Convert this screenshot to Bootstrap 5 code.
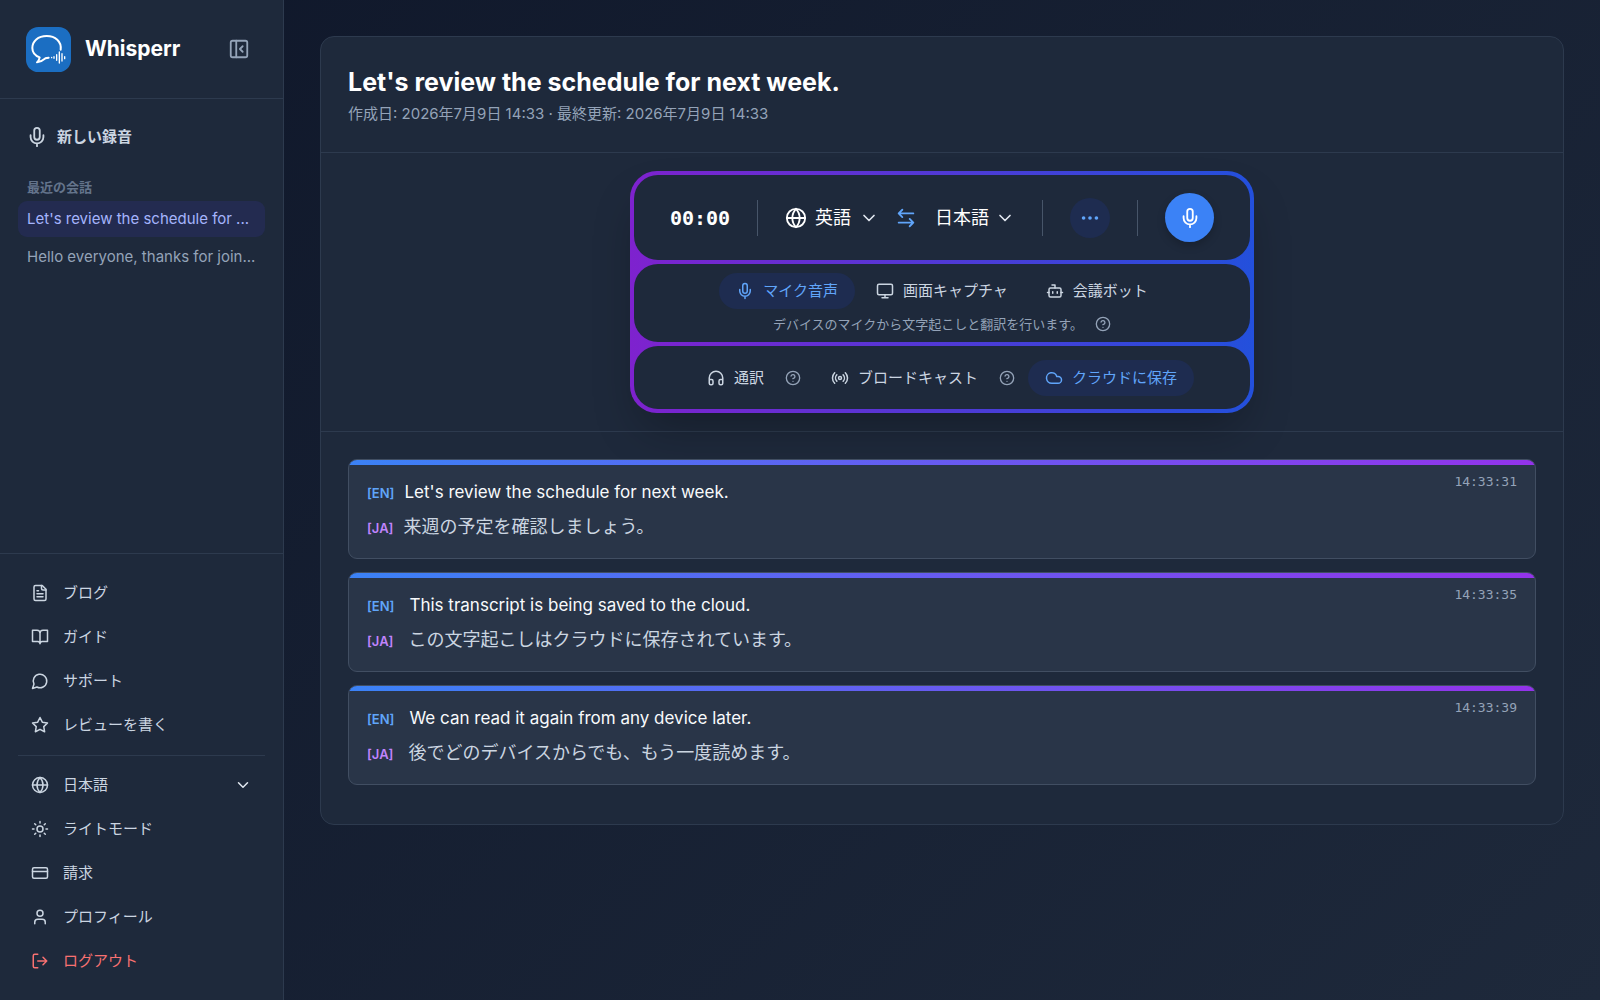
<!DOCTYPE html>
<html lang="ja" data-bs-theme="dark">
<head>
<meta charset="utf-8">
<meta name="viewport" content="width=device-width, initial-scale=1">
<title>Whisperr</title>
<link rel="stylesheet" href="https://cdn.jsdelivr.net/npm/bootstrap@5.3.0/dist/css/bootstrap.min.css">
<style>
  :root {
    --slate-800: #1e293b;
    --line: #2d3a4e;
    --text: #cbd5e1;
    --muted: #94a3b8;
    --blue: #60a5fa;
    --tint: #1e2c50;
  }
  body {
    font-family: Inter, "Noto Sans CJK JP", sans-serif;
    font-size: 15px;
    line-height: 24px;
    color: var(--text);
    background: linear-gradient(135deg, #0f172a, #1e293b) fixed;
  }
  a { color: inherit; text-decoration: none; }
  button { color: inherit; }
  .ico { width: 18px; height: 18px; flex: none; fill: none; stroke: currentColor; stroke-width: 2; stroke-linecap: round; stroke-linejoin: round; }
  .ico-lg { width: 22px; height: 22px; }
  .ico-sm { width: 16px; height: 16px; }
  .plain { background: none; border: 0; padding: 0; }

  .side { width: 284px; background: var(--slate-800); border-right: 1px solid var(--line); }
  .side-head { height: 99px; padding: 0 33px 0 26px; border-bottom: 1px solid var(--line); }
  .logo-link { gap: 14px; }
  .logo { width: 45px; height: 45px; flex: none; }
  .brand { font-size: 21px; font-weight: 700; color: #fff; }
  .side-list { padding: 20px 18px 0; }
  .new-rec { height: 36px; padding: 0 9px; gap: 9px; font-weight: 700; }
  .side-label { font-size: 13px; font-weight: 700; line-height: 20px; color: #64748b; padding: 0 9px; margin: 22px 0 4px; }
  .talk { height: 36px; line-height: 36px; padding: 0 9px; margin-bottom: 2px; border-radius: 9px; color: var(--muted); }
  .talk.on { background: #232b50; color: #a5b4fc; }
  .side-menu { padding: 17px 18px; border-top: 1px solid var(--line); }
  .menu-row { height: 44px; padding: 0 13px; gap: 14px; }
  .menu-split { border-top: 1px solid var(--line); margin: 8px 0 7px; }
  .logout { color: #f87171; }

  .pick { appearance: none; border: 0; padding: 0; color: inherit; font: inherit; cursor: pointer; border-radius: 0;
    background: transparent url("data:image/svg+xml,%3Csvg xmlns='http://www.w3.org/2000/svg' viewBox='0 0 24 24' fill='none' stroke='%23e2e8f0' stroke-width='2' stroke-linecap='round' stroke-linejoin='round'%3E%3Cpath d='m6 9 6 6 6-6'/%3E%3C/svg%3E") no-repeat right center / 20px; }
  .pick option { background: var(--slate-800); }
  .pick-side { background-size: 18px; }
  .pick-2 { width: 64px; }
  .pick-3 { width: 80px; }

  .stage { padding: 36px; }
  .sheet { background: var(--slate-800); border: 1px solid var(--line); border-radius: 14px; }
  .sheet-head { padding: 27px 27px 26px; border-bottom: 1px solid var(--line); }
  .sheet-title { font-size: 25px; line-height: 36px; font-weight: 700; color: #fff; margin: 0 0 2px; }
  .meta { color: var(--muted); }
  .rec-wrap { padding: 18px; border-bottom: 1px solid var(--line); }
  .rec { width: 624px; padding: 4px; gap: 4px; border-radius: 27px; background: linear-gradient(90deg, #7e22ce, #2350dc); box-shadow: 0 24px 48px -12px rgba(0, 0, 0, .3); }
  .rec-row { background: var(--slate-800); border-radius: 24px; }
  .rec-main { height: 85px; gap: 27px; font-size: 18px; color: #fff; }
  .clock { font: 700 20px/28px "DejaVu Sans Mono", monospace; }
  .bar { width: 1px; height: 36px; background: #475569; }
  .more { width: 40px; height: 40px; background: var(--tint); color: var(--blue); }
  .go { width: 49px; height: 49px; background: #3b82f6; color: #fff; box-shadow: 0 4px 9px rgba(0, 0, 0, .2); }
  .swap { color: var(--blue); margin: 0 18px 0 16px; }
  .rec-source { padding: 9px 0 8px; gap: 5px; }
  .rec-opts { padding: 14px 0 13px; gap: 13px; }
  .pill { height: 36px; padding: 0 17px; gap: 9px; border-radius: 18px; white-space: nowrap; }
  .pill.on { background: var(--tint); color: var(--blue); }
  .note { font-size: 13px; line-height: 20px; gap: 12px; color: var(--muted); }

  .lines { padding: 27px 27px 26px; }
  .line-card { background: #293548; border: 1px solid #414e62; border-radius: 9px; padding: 18px; margin-bottom: 13px; gap: 8px; overflow: hidden; }
  .line-card::before { content: ""; position: absolute; inset: 0 0 auto; height: 5px; background: linear-gradient(90deg, #3b82f6, #9333ea); }
  .tag { font-size: 13px; line-height: 16px; font-weight: 600; margin-right: 10px; }
  .tag-en { color: var(--blue); }
  .tag-ja { color: #c084fc; }
  .said { height: 28px; font-size: 17px; line-height: 28px; color: #f8fafc; }
  .ja { height: 26px; font-size: 18px; line-height: 26px; }
  .indent { margin-left: 5px; }
  .stamp { position: absolute; top: 12px; right: 18px; font: 13px/20px "DejaVu Sans Mono", monospace; color: var(--muted); }
</style>
<script src="https://cdn.jsdelivr.net/npm/bootstrap@5.3.0/dist/js/bootstrap.bundle.min.js" defer></script>
</head>
<body>
<svg class="d-none" aria-hidden="true">
  <symbol id="mic" viewBox="0 0 24 24"><path d="M12 2a3 3 0 0 0-3 3v7a3 3 0 0 0 6 0V5a3 3 0 0 0-3-3Z"/><path d="M19 10v2a7 7 0 0 1-14 0v-2M12 19v3"/></symbol>
  <symbol id="panel" viewBox="0 0 24 24"><rect x="3" y="3" width="18" height="18" rx="2"/><path d="M9 3v18M16 15l-3-3 3-3"/></symbol>
  <symbol id="file" viewBox="0 0 24 24"><path d="M15 2H6a2 2 0 0 0-2 2v16a2 2 0 0 0 2 2h12a2 2 0 0 0 2-2V7Z"/><path d="M14 2v4a2 2 0 0 0 2 2h4M10 9H8M16 13H8M16 17H8"/></symbol>
  <symbol id="book" viewBox="0 0 24 24"><path d="M2 3h6a4 4 0 0 1 4 4v14a3 3 0 0 0-3-3H2zM22 3h-6a4 4 0 0 0-4 4v14a3 3 0 0 1 3-3h7z"/></symbol>
  <symbol id="chat" viewBox="0 0 24 24"><path d="M7.9 20A9 9 0 1 0 4 16.1L2 22Z"/></symbol>
  <symbol id="star" viewBox="0 0 24 24"><path d="m12 2 3.09 6.26L22 9.27l-5 4.87 1.18 6.88L12 17.77l-6.18 3.25L7 14.14 2 9.27l6.91-1.01Z"/></symbol>
  <symbol id="globe" viewBox="0 0 24 24"><circle cx="12" cy="12" r="10"/><path d="M12 2a14.5 14.5 0 0 0 0 20 14.5 14.5 0 0 0 0-20M2 12h20"/></symbol>
  <symbol id="sun" viewBox="0 0 24 24"><circle cx="12" cy="12" r="4"/><path d="M12 2v2M12 20v2M4.93 4.93l1.41 1.41M17.66 17.66l1.41 1.41M2 12h2M20 12h2M6.34 17.66l-1.41 1.41M19.07 4.93l-1.41 1.41"/></symbol>
  <symbol id="cash" viewBox="0 0 24 24"><rect x="2" y="5" width="20" height="14" rx="2"/><path d="M2 10h20"/></symbol>
  <symbol id="user" viewBox="0 0 24 24"><path d="M19 21v-2a4 4 0 0 0-4-4H9a4 4 0 0 0-4 4v2"/><circle cx="12" cy="7" r="4"/></symbol>
  <symbol id="exit" viewBox="0 0 24 24"><path d="M9 21H5a2 2 0 0 1-2-2V5a2 2 0 0 1 2-2h4M16 17l5-5-5-5M21 12H9"/></symbol>
  <symbol id="swap" viewBox="0 0 24 24"><path d="M8 3 4 7l4 4M4 7h16M16 21l4-4-4-4M20 17H4"/></symbol>
  <symbol id="dots" viewBox="0 0 24 24"><circle cx="5" cy="12" r="1"/><circle cx="12" cy="12" r="1"/><circle cx="19" cy="12" r="1"/></symbol>
  <symbol id="screen" viewBox="0 0 24 24"><rect x="2" y="3" width="20" height="14" rx="2"/><path d="M8 21h8M12 17v4"/></symbol>
  <symbol id="bot" viewBox="0 0 24 24"><path d="M12 8V4H8M2 14h2M20 14h2M15 13v2M9 13v2"/><rect x="4" y="8" width="16" height="12" rx="2"/></symbol>
  <symbol id="phones" viewBox="0 0 24 24"><path d="M3 14h3a2 2 0 0 1 2 2v3a2 2 0 0 1-2 2H5a2 2 0 0 1-2-2v-7a9 9 0 0 1 18 0v7a2 2 0 0 1-2 2h-1a2 2 0 0 1-2-2v-3a2 2 0 0 1 2-2h3"/></symbol>
  <symbol id="radio" viewBox="0 0 24 24"><path d="M4.9 19.1C1 15.2 1 8.8 4.9 4.9M7.8 16.2c-2.3-2.3-2.3-6.1 0-8.5M16.2 7.8c2.3 2.3 2.3 6.1 0 8.5M19.1 4.9C23 8.8 23 15.1 19.1 19"/><circle cx="12" cy="12" r="2"/></symbol>
  <symbol id="cloud" viewBox="0 0 24 24"><path d="M17.5 19H9a7 7 0 1 1 6.71-9h1.79a4.5 4.5 0 1 1 0 9Z"/></symbol>
  <symbol id="help" viewBox="0 0 24 24"><circle cx="12" cy="12" r="10"/><path d="M9.09 9a3 3 0 0 1 5.83 1c0 2-3 3-3 3M12 17h.01"/></symbol>
</svg>

<div class="d-flex align-items-stretch min-vh-100">
  <aside class="side d-flex flex-column flex-shrink-0">
    <div class="side-head d-flex align-items-center justify-content-between">
      <a href="#" class="logo-link d-flex align-items-center">
        <svg class="logo" viewBox="0 0 135 135" aria-hidden="true">
          <rect width="135" height="135" rx="37" fill="#1b6ec2"/>
          <g fill="none" stroke="#fff" stroke-linecap="round" stroke-linejoin="round">
            <path stroke-width="6" d="M104 68C107 43 88 27 62 27C36 27 19 43 19 63C19 76 27 86 41 91C40 98 37 102 33 106C45 105 52 99 58 94L68 92"/>
            <path stroke-width="4" d="M77 91v1M84 89v5M92 83v17M100 75v33M108 80v22M116 89v6"/>
          </g>
        </svg>
        <span class="brand">Whisperr</span>
      </a>
      <button type="button" class="plain meta d-flex" aria-label="サイドバーを閉じる"><svg class="ico ico-lg"><use href="#panel"/></svg></button>
    </div>
    <div class="side-list flex-grow-1">
      <button type="button" class="new-rec plain px-2 d-flex align-items-center w-100"><svg class="ico ico-lg"><use href="#mic"/></svg>新しい録音</button>
      <h2 class="side-label">最近の会話</h2>
      <nav>
        <a href="#" class="talk on d-block text-truncate">Let's review the schedule for ...</a>
        <a href="#" class="talk d-block text-truncate">Hello everyone, thanks for join...</a>
      </nav>
    </div>
    <nav class="side-menu">
      <a href="#" class="menu-row d-flex align-items-center"><svg class="ico"><use href="#file"/></svg>ブログ</a>
      <a href="#" class="menu-row d-flex align-items-center"><svg class="ico"><use href="#book"/></svg>ガイド</a>
      <a href="#" class="menu-row d-flex align-items-center"><svg class="ico"><use href="#chat"/></svg>サポート</a>
      <a href="#" class="menu-row d-flex align-items-center"><svg class="ico"><use href="#star"/></svg>レビューを書く</a>
      <div class="menu-split"></div>
      <label class="menu-row d-flex align-items-center"><svg class="ico"><use href="#globe"/></svg>
        <select class="pick pick-side flex-grow-1" aria-label="表示言語"><option>日本語</option></select></label>
      <a href="#" class="menu-row d-flex align-items-center"><svg class="ico"><use href="#sun"/></svg>ライトモード</a>
      <a href="#" class="menu-row d-flex align-items-center"><svg class="ico"><use href="#cash"/></svg>請求</a>
      <a href="#" class="menu-row d-flex align-items-center"><svg class="ico"><use href="#user"/></svg>プロフィール</a>
      <a href="#" class="menu-row logout d-flex align-items-center"><svg class="ico"><use href="#exit"/></svg>ログアウト</a>
    </nav>
  </aside>

  <main class="stage flex-grow-1">
    <div class="sheet">
      <header class="sheet-head">
        <h1 class="sheet-title">Let's review the schedule for next week.</h1>
        <div class="meta">作成日: 2026年7月9日 14:33 · 最終更新: 2026年7月9日 14:33</div>
      </header>

      <section class="rec-wrap d-flex justify-content-center">
        <div class="rec d-flex flex-column">
          <div class="rec-row rec-main d-flex align-items-center justify-content-center">
            <span class="clock">00:00</span>
            <span class="bar"></span>
            <div class="d-flex align-items-center">
              <label class="d-flex align-items-center gap-2"><svg class="ico ico-lg"><use href="#globe"/></svg>
                <select class="pick pick-2" aria-label="話す言語"><option>英語</option></select></label>
              <button type="button" class="plain swap d-flex" aria-label="言語を入れ替える"><svg class="ico ico-lg"><use href="#swap"/></svg></button>
              <select class="pick pick-3" aria-label="翻訳先の言語"><option>日本語</option></select>
            </div>
            <span class="bar"></span>
            <button type="button" class="plain more rounded-circle d-flex align-items-center justify-content-center" aria-label="その他"><svg class="ico ico-lg"><use href="#dots"/></svg></button>
            <span class="bar"></span>
            <button type="button" class="plain go rounded-circle d-flex align-items-center justify-content-center" aria-label="録音を開始"><svg class="ico ico-lg"><use href="#mic"/></svg></button>
          </div>
          <div class="rec-row rec-source d-flex flex-column align-items-center">
            <div class="d-flex gap-1">
              <button type="button" class="plain pill on d-flex align-items-center" aria-pressed="true"><svg class="ico"><use href="#mic"/></svg>マイク音声</button>
              <button type="button" class="plain pill d-flex align-items-center"><svg class="ico"><use href="#screen"/></svg>画面キャプチャ</button>
              <button type="button" class="plain pill d-flex align-items-center"><svg class="ico"><use href="#bot"/></svg>会議ボット</button>
            </div>
            <div class="note d-flex align-items-center">デバイスのマイクから文字起こしと翻訳を行います。<svg class="ico ico-sm"><use href="#help"/></svg></div>
          </div>
          <div class="rec-row rec-opts d-flex align-items-center justify-content-center">
            <div class="d-flex align-items-center gap-1">
              <button type="button" class="plain pill d-flex align-items-center"><svg class="ico"><use href="#phones"/></svg>通訳</button>
              <svg class="ico ico-sm meta"><use href="#help"/></svg>
            </div>
            <div class="d-flex align-items-center gap-1">
              <button type="button" class="plain pill d-flex align-items-center"><svg class="ico"><use href="#radio"/></svg>ブロードキャスト</button>
              <svg class="ico ico-sm meta"><use href="#help"/></svg>
            </div>
            <button type="button" class="plain pill on d-flex align-items-center" aria-pressed="true"><svg class="ico"><use href="#cloud"/></svg>クラウドに保存</button>
          </div>
        </div>
      </section>

      <section class="lines">
        <article class="line-card position-relative d-flex flex-column">
          <div class="said d-flex align-items-baseline"><span class="tag tag-en">[EN]</span><span>Let's review the schedule for next week.</span></div>
          <div class="ja d-flex align-items-baseline"><span class="tag tag-ja">[JA]</span><span>来週の予定を確認しましょう。</span></div>
          <time class="stamp">14:33:31</time>
        </article>
        <article class="line-card position-relative d-flex flex-column">
          <div class="said d-flex align-items-baseline"><span class="tag tag-en">[EN]</span><span class="indent">This transcript is being saved to the cloud.</span></div>
          <div class="ja d-flex align-items-baseline"><span class="tag tag-ja">[JA]</span><span class="indent">この文字起こしはクラウドに保存されています。</span></div>
          <time class="stamp">14:33:35</time>
        </article>
        <article class="line-card position-relative d-flex flex-column">
          <div class="said d-flex align-items-baseline"><span class="tag tag-en">[EN]</span><span class="indent">We can read it again from any device later.</span></div>
          <div class="ja d-flex align-items-baseline"><span class="tag tag-ja">[JA]</span><span class="indent">後でどのデバイスからでも、もう一度読めます。</span></div>
          <time class="stamp">14:33:39</time>
        </article>
      </section>
    </div>
  </main>
</div>
</body>
</html>
